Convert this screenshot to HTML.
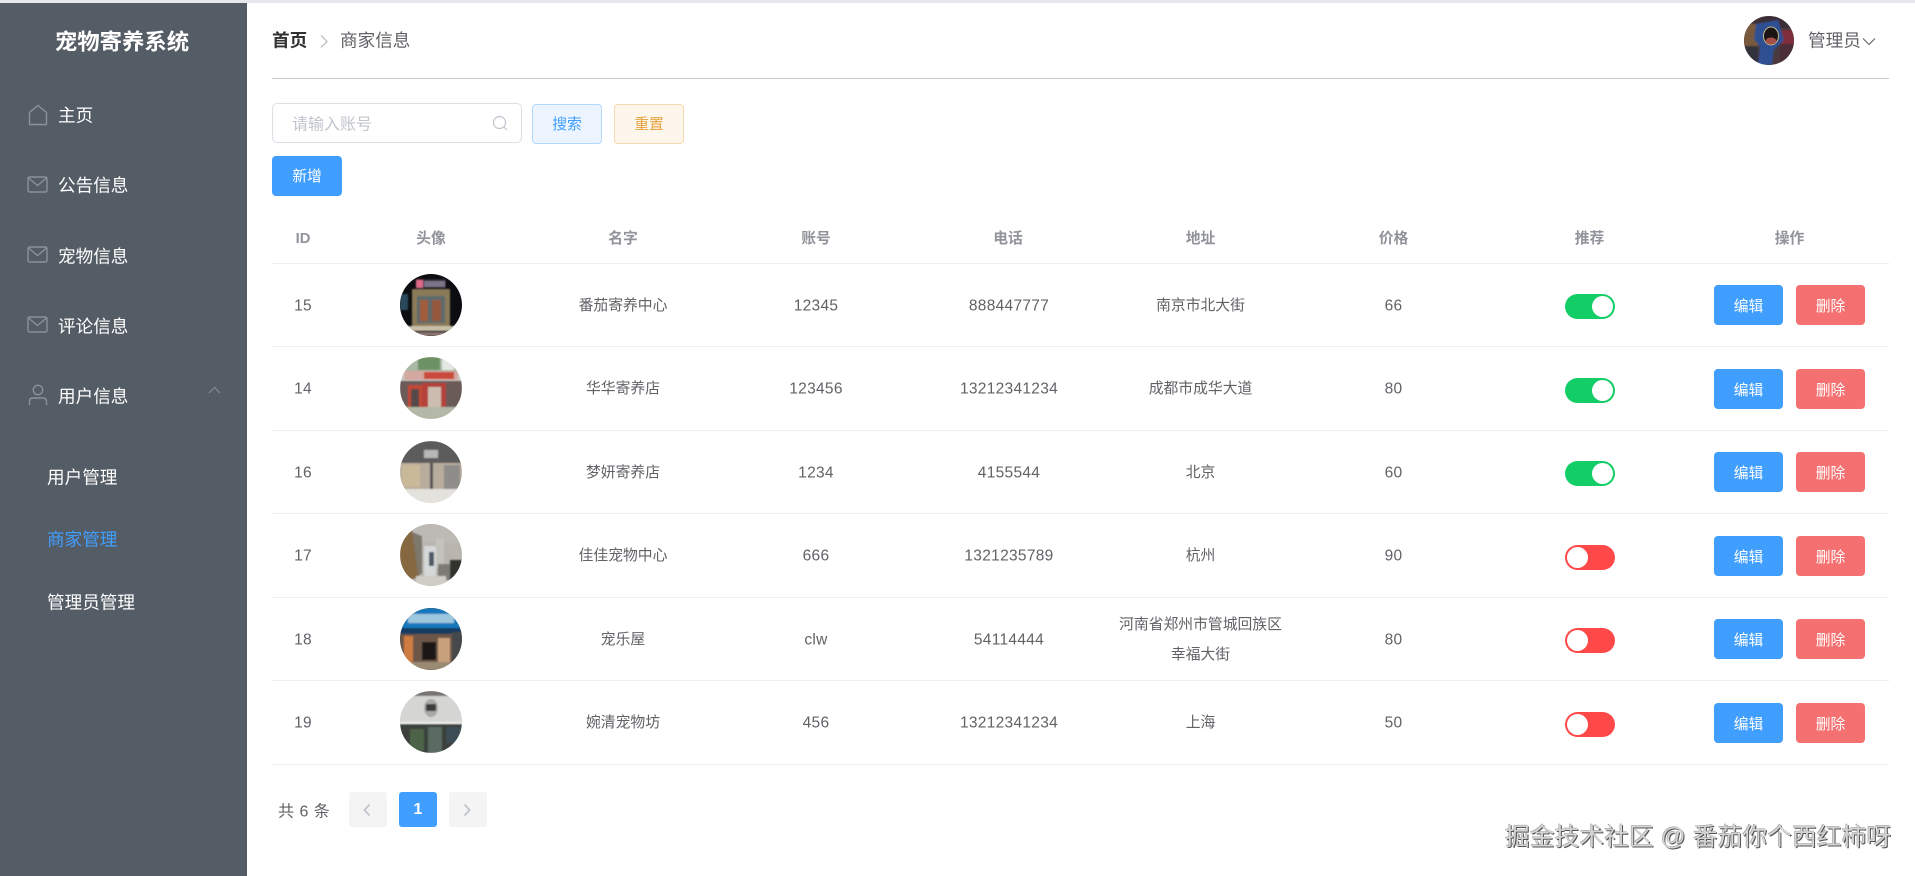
<!DOCTYPE html>
<html lang="zh-CN">
<head>
<meta charset="utf-8">
<title>宠物寄养系统</title>
<style>
*{box-sizing:border-box;margin:0;padding:0}
html,body{width:1915px;height:876px;overflow:hidden;background:#fff}
body{position:relative;font-family:"Liberation Sans","Noto Sans CJK SC",sans-serif;color:#606266}
.abs{position:absolute}
.t{position:absolute;transform:translate(-50%,-50%);white-space:nowrap;line-height:1.2}
.l{position:absolute;transform:translateY(-50%);white-space:nowrap;line-height:1.2}
#top{left:0;top:0;width:1915px;height:3px;background:#e6e8ec}
#side{left:0;top:3px;width:247px;height:873px;background:#545c66}
.menu{color:#fff;font-size:17.6px;left:58px;margin-top:1px}
.sub{color:#fff;font-size:17.6px;left:47px;margin-top:1px}
.ic{position:absolute;fill:none;stroke:#8a9199;stroke-width:1.4}
.line{position:absolute;left:272px;width:1617px;height:1px;background:#ebeef5}
.th{font-size:14.8px;font-weight:700;color:#909399;margin-top:1px}
.td{font-size:14.8px;color:#606266;margin-top:1.7px}
.n{font-size:15.5px;letter-spacing:.3px}
.btn{position:absolute;border-radius:4px;display:flex;align-items:center;justify-content:center;font-size:14.8px;color:#fff;height:39.5px;width:69px}
.e{left:1714px;background:#409eff;padding-top:1px}
.d{left:1796px;background:#f56c6c;opacity:.97;padding-top:1px}
.sw{position:absolute;left:1565px;width:50px;height:25px;border-radius:13px}
.sw i{position:absolute;top:2px;width:21px;height:21px;border-radius:50%;background:#fff}
.on{background:#13ce66}.on i{left:27px}
.off{background:#ff4949}.off i{left:2px}
.av{position:absolute;left:400px;width:62px;height:62px;border-radius:50%;overflow:hidden}
.av svg{display:block;width:62px;height:62px}
.pg{position:absolute;top:792px;width:38px;height:35px;border-radius:3px;background:#f4f4f5;display:flex;align-items:center;justify-content:center}
#wm{position:absolute;left:1505px;top:822px;font-size:24.7px;line-height:32px;white-space:nowrap;color:#d4d4d4;text-shadow:1px 1px 0 #555,-.5px -.5px 0 #999;letter-spacing:.1px}
</style>
</head>
<body>
<svg width="0" height="0" style="position:absolute"><defs><filter id="b" x="-10%" y="-10%" width="120%" height="120%"><feGaussianBlur stdDeviation=".7"/></filter></defs></svg>

<div class="abs" id="top"></div>
<div class="abs" id="side"></div>

<div class="t" style="left:122px;top:42.5px;font-size:22.4px;font-weight:700;color:#fff">宠物寄养系统</div>

<svg class="ic" style="left:28px;top:104px" width="20" height="22" viewBox="0 0 20 22"><path d="M1.5 20.5V8.5L10 1.5l8.500 7v12z"/></svg>
<div class="l menu" style="top:115px">主页</div>

<svg class="ic" style="left:27px;top:176px" width="21" height="17" viewBox="0 0 21 17"><rect x="1" y="1" width="19" height="15" rx="1.5"/><path d="M1.500 2l9 7.500 9-7.500"/></svg>
<div class="l menu" style="top:185px">公告信息</div>

<svg class="ic" style="left:27px;top:246px" width="21" height="17" viewBox="0 0 21 17"><rect x="1" y="1" width="19" height="15" rx="1.5"/><path d="M1.500 2l9 7.500 9-7.500"/></svg>
<div class="l menu" style="top:255.5px">宠物信息</div>

<svg class="ic" style="left:27px;top:316px" width="21" height="17" viewBox="0 0 21 17"><rect x="1" y="1" width="19" height="15" rx="1.5"/><path d="M1.500 2l9 7.500 9-7.500"/></svg>
<div class="l menu" style="top:325.5px">评论信息</div>

<svg class="ic" style="left:28px;top:384px" width="20" height="22" viewBox="0 0 20 22"><circle cx="10" cy="6" r="4.7"/><path d="M1.500 21v-3.500Q1.500 14 5 14h10q3.500 0 3.500 3.500V21"/></svg>
<div class="l menu" style="top:395.5px">用户信息</div>
<svg class="ic" style="left:208px;top:386px;stroke:#7d848c" width="13" height="8" viewBox="0 0 13 8"><path d="M1 7l5.500-5.500L12 7"/></svg>

<div class="l sub" style="top:477px">用户管理</div>
<div class="l sub" style="top:539px;color:#409eff">商家管理</div>
<div class="l sub" style="top:602px">管理员管理</div>

<!-- header -->
<div class="l" style="left:272px;top:41px;font-size:17.6px;font-weight:700;color:#303133">首页</div>
<svg class="abs" style="left:319px;top:34px" width="10" height="15" viewBox="0 0 10 15" fill="none" stroke="#b4b8bf" stroke-width="1.2"><path d="M2 1.500l6 6-6 6"/></svg>
<div class="l" style="left:340px;top:41px;font-size:17.6px;color:#606266">商家信息</div>

<div class="abs" style="left:1744px;top:16px;width:50px;height:49px;border-radius:50%;overflow:hidden">
<svg width="50" height="49" viewBox="0 0 50 49"><rect width="50" height="49" fill="#4a3a3c"/><g filter="url(#b)"><rect x="0" y="0" width="50" height="12" fill="#3b2f36"/><rect x="0" y="8" width="14" height="22" fill="#7a5a3e"/><rect x="0" y="30" width="14" height="19" fill="#33303e"/><rect x="36" y="14" width="14" height="14" fill="#7e2f3a"/><rect x="36" y="28" width="14" height="21" fill="#4b2f38"/><path d="M12 8L34 4l6 20-10 10-2 15H14l2-18-6-8z" fill="#2f4f92"/></g><ellipse cx="27" cy="20" rx="7.500" ry="9" fill="#1a1414" stroke="#c9b98e" stroke-width="1"/><ellipse cx="27" cy="25" rx="5.500" ry="3.500" fill="#a25048"/></svg>
</div>
<div class="l" style="left:1808px;top:40.5px;font-size:17.6px;color:#606266">管理员</div>
<svg class="abs" style="left:1862px;top:37px" width="14" height="9" viewBox="0 0 14 9" fill="none" stroke="#606266" stroke-width="1.1"><path d="M1 1.500l6 6 6-6"/></svg>

<div class="abs" style="left:272px;top:78px;width:1617px;height:1px;background:#c8c8c8"></div>

<!-- toolbar -->
<div class="abs" style="left:272px;top:103px;width:250px;height:40px;border:1px solid #dcdfe6;border-radius:5px;background:#fff"></div>
<div class="l" style="left:292px;top:124.5px;font-size:16px;color:#c0c4cc">请输入账号</div>
<svg class="abs" style="left:492px;top:115px" width="16" height="16" viewBox="0 0 16 16" fill="none" stroke="#c0c4cc" stroke-width="1.2"><circle cx="7.500" cy="7.500" r="6"/><path d="M12 12l3 3"/></svg>

<div class="btn" style="left:532px;top:104px;width:70px;background:#ecf5ff;border:1px solid #b3d8ff;color:#409eff">搜索</div>
<div class="btn" style="left:614px;top:104px;width:70px;background:#fdf6ec;border:1px solid #f5dab1;color:#e6a23c">重置</div>
<div class="btn" style="left:272px;top:156px;width:70px;background:#409eff">新增</div>

<!-- table head -->
<div class="t th" style="left:303px;top:238.5px">ID</div>
<div class="t th" style="left:431px;top:238.5px">头像</div>
<div class="t th" style="left:623px;top:238.5px">名字</div>
<div class="t th" style="left:816px;top:238.5px">账号</div>
<div class="t th" style="left:1008px;top:238.5px">电话</div>
<div class="t th" style="left:1200.5px;top:238.5px">地址</div>
<div class="t th" style="left:1393.5px;top:238.5px">价格</div>
<div class="t th" style="left:1589.5px;top:238.5px">推荐</div>
<div class="t th" style="left:1789.5px;top:238.5px">操作</div>
<div class="line" style="top:263px"></div>

<!-- row 1 -->
<div class="t td n" style="left:303px;top:305px">15</div>
<div class="av" style="top:274px"><svg viewBox="0 0 62 62"><rect width="62" height="62" fill="#0c0d10"/><g filter="url(#b)"><rect x="16" y="5" width="30" height="9" fill="#2b2430"/><rect x="16" y="6" width="7" height="8" fill="#e06a88"/><rect x="24" y="7" width="21" height="6" fill="#7a7488"/><rect x="12" y="15" width="38" height="37" fill="#8b7a58"/><rect x="17" y="22" width="28" height="27" fill="#5d6a6a"/><rect x="20" y="26" width="8" height="21" fill="#a05c3a"/><rect x="32" y="26" width="9" height="21" fill="#96583c"/><rect x="0" y="20" width="8" height="16" fill="#2a4a5c"/><rect x="8" y="52" width="46" height="5" fill="#c9bfa8"/><rect x="15" y="58" width="32" height="4" fill="#8e7470"/></g></svg></div>
<div class="t td" style="left:623px;top:305.5px">番茄寄养中心</div>
<div class="t td n" style="left:816px;top:305.5px">12345</div>
<div class="t td n" style="left:1009px;top:305.5px">888447777</div>
<div class="t td" style="left:1200.5px;top:305.5px">南京市北大街</div>
<div class="t td n" style="left:1393.5px;top:305.5px">66</div>
<div class="sw on" style="top:294px"><i></i></div>
<div class="btn e" style="top:285px">编辑</div>
<div class="btn d" style="top:285px">删除</div>
<div class="line" style="top:346px"></div>

<!-- row 2 -->
<div class="t td n" style="left:303px;top:388.5px">14</div>
<div class="av" style="top:357px"><svg viewBox="0 0 62 62"><rect width="62" height="62" fill="#c9cdc8"/><g filter="url(#b)"><rect x="0" y="0" width="62" height="14" fill="#a9b8a4"/><rect x="18" y="0" width="22" height="13" fill="#6c9163"/><rect x="42" y="2" width="12" height="11" fill="#e4e8e4"/><rect x="4" y="14" width="54" height="9" fill="#d4a7a0"/><rect x="24" y="15" width="30" height="7" fill="#c9483a"/><rect x="0" y="24" width="62" height="26" fill="#6a5a58"/><rect x="22" y="26" width="24" height="24" fill="#b4433a"/><rect x="28" y="30" width="13" height="20" fill="#cdbdb0"/><rect x="8" y="28" width="14" height="22" fill="#c24a36"/><rect x="11" y="32" width="8" height="18" fill="#574a48"/><rect x="0" y="50" width="62" height="12" fill="#b4b8a6"/></g></svg></div>
<div class="t td" style="left:623px;top:388.5px">华华寄养店</div>
<div class="t td n" style="left:816px;top:388.5px">123456</div>
<div class="t td n" style="left:1009px;top:388.5px">13212341234</div>
<div class="t td" style="left:1200.5px;top:388.5px">成都市成华大道</div>
<div class="t td n" style="left:1393.5px;top:388.5px">80</div>
<div class="sw on" style="top:378px"><i></i></div>
<div class="btn e" style="top:369px">编辑</div>
<div class="btn d" style="top:369px">删除</div>
<div class="line" style="top:430px"></div>

<!-- row 3 -->
<div class="t td n" style="left:303px;top:472px">16</div>
<div class="av" style="top:441px"><svg viewBox="0 0 62 62"><rect width="62" height="62" fill="#e0dcd4"/><g filter="url(#b)"><rect width="62" height="22" fill="#5c5c5c"/><rect x="24" y="9" width="14" height="8" fill="#b8b8b8"/><rect x="0" y="22" width="62" height="26" fill="#b8ad9c"/><rect x="2" y="24" width="18" height="22" fill="#c9b998"/><rect x="30" y="22" width="3" height="40" fill="#555"/><rect x="44" y="24" width="16" height="24" fill="#8f8d8a"/><rect x="0" y="48" width="62" height="14" fill="#e4e2dd"/></g></svg></div>
<div class="t td" style="left:623px;top:472px">梦妍寄养店</div>
<div class="t td n" style="left:816px;top:472px">1234</div>
<div class="t td n" style="left:1009px;top:472px">4155544</div>
<div class="t td" style="left:1200.5px;top:472px">北京</div>
<div class="t td n" style="left:1393.5px;top:472px">60</div>
<div class="sw on" style="top:461px"><i></i></div>
<div class="btn e" style="top:452px">编辑</div>
<div class="btn d" style="top:452px">删除</div>
<div class="line" style="top:513px"></div>

<!-- row 4 -->
<div class="t td n" style="left:303px;top:555.5px">17</div>
<div class="av" style="top:524px"><svg viewBox="0 0 62 62"><rect width="62" height="62" fill="#b9b5ae"/><g filter="url(#b)"><rect width="62" height="18" fill="#bdb9b5"/><path d="M0 8L12 6 20 54 0 56z" fill="#86683f"/><path d="M12 8l10 4v38H18z" fill="#7d776c"/><rect x="24" y="22" width="12" height="36" fill="#d5d8d8"/><rect x="29" y="28" width="5" height="14" fill="#4d5a66"/><rect x="36" y="14" width="8" height="30" fill="#c4c2bd"/><rect x="38" y="40" width="12" height="16" fill="#7d7a75"/><rect x="50" y="36" width="12" height="22" fill="#33322f"/><rect x="16" y="52" width="30" height="10" fill="#cfcdc5"/></g></svg></div>
<div class="t td" style="left:623px;top:555.5px">佳佳宠物中心</div>
<div class="t td n" style="left:816px;top:555.5px">666</div>
<div class="t td n" style="left:1009px;top:555.5px">1321235789</div>
<div class="t td" style="left:1200.5px;top:555.5px">杭州</div>
<div class="t td n" style="left:1393.5px;top:555.5px">90</div>
<div class="sw off" style="top:545px"><i></i></div>
<div class="btn e" style="top:536px">编辑</div>
<div class="btn d" style="top:536px">删除</div>
<div class="line" style="top:597px"></div>

<!-- row 5 -->
<div class="t td n" style="left:303px;top:639.5px">18</div>
<div class="av" style="top:608px"><svg viewBox="0 0 62 62"><rect width="62" height="62" fill="#57504a"/><g filter="url(#b)"><rect width="62" height="21" fill="#1478bc"/><rect x="8" y="6" width="46" height="9" fill="#9ec8de"/><rect x="0" y="20" width="62" height="6" fill="#123a60"/><rect x="0" y="26" width="62" height="36" fill="#6d5646"/><rect x="4" y="28" width="9" height="26" fill="#cf7b3f"/><rect x="22" y="34" width="14" height="18" fill="#1c1614"/><rect x="38" y="30" width="12" height="24" fill="#c9a07c"/><rect x="52" y="24" width="10" height="30" fill="#44484c"/><rect x="0" y="54" width="62" height="8" fill="#9a8a72"/></g></svg></div>
<div class="t td" style="left:623px;top:639.5px">宠乐屋</div>
<div class="t td n" style="left:816px;top:639.5px">clw</div>
<div class="t td n" style="left:1009px;top:639.5px">54114444</div>
<div class="t td" style="left:1200.5px;top:624.5px;margin-top:.5px;line-height:30px;text-align:center;transform:translate(-50%,-50%) translateY(15px)">河南省郑州市管城回族区<br>幸福大街</div>
<div class="t td n" style="left:1393.5px;top:639.5px">80</div>
<div class="sw off" style="top:628px"><i></i></div>
<div class="btn e" style="top:619px">编辑</div>
<div class="btn d" style="top:619px">删除</div>
<div class="line" style="top:680px"></div>

<!-- row 6 -->
<div class="t td n" style="left:303px;top:722.5px">19</div>
<div class="av" style="top:691px"><svg viewBox="0 0 62 62"><rect width="62" height="62" fill="#cfcfcd"/><g filter="url(#b)"><rect width="62" height="5" fill="#77736f"/><rect x="0" y="5" width="62" height="28" fill="#d5d5d3"/><ellipse cx="31" cy="17" rx="7" ry="9" fill="#a8a8a6"/><rect x="26" y="13" width="10" height="7" fill="#3a3a3a"/><rect x="0" y="31" width="62" height="2" fill="#f0f0ee"/><rect x="0" y="33" width="62" height="29" fill="#3a403a"/><rect x="10" y="38" width="14" height="22" fill="#4d6447"/><rect x="28" y="36" width="14" height="26" fill="#5a6c62"/><rect x="46" y="36" width="16" height="16" fill="#3c4d55"/></g></svg></div>
<div class="t td" style="left:623px;top:722.5px">婉清宠物坊</div>
<div class="t td n" style="left:816px;top:722.5px">456</div>
<div class="t td n" style="left:1009px;top:722.5px">13212341234</div>
<div class="t td" style="left:1200.5px;top:722.5px">上海</div>
<div class="t td n" style="left:1393.5px;top:722.5px">50</div>
<div class="sw off" style="top:712px"><i></i></div>
<div class="btn e" style="top:703px">编辑</div>
<div class="btn d" style="top:703px">删除</div>
<div class="line" style="top:764px"></div>

<!-- pagination -->
<div class="l" style="left:278px;top:811.5px;font-size:16px;color:#606266;letter-spacing:.5px">共 6 条</div>
<div class="pg" style="left:349px"><svg style="margin-right:2px" width="10" height="14" viewBox="0 0 10 14" fill="none" stroke="#c0c4cc" stroke-width="1.8"><path d="M7.500 1.500L2.500 7l5 5.500"/></svg></div>
<div class="pg" style="left:399px;background:#409eff;color:#fff;font-weight:700;font-size:16px">1</div>
<div class="pg" style="left:448.5px"><svg style="margin-right:2px" width="10" height="14" viewBox="0 0 10 14" fill="none" stroke="#c0c4cc" stroke-width="1.8"><path d="M2.500 1.500l5 5.500-5 5.500"/></svg></div>

<div id="wm">掘金技术社区 @ 番茄你个西红柿呀</div>
</body>
</html>
